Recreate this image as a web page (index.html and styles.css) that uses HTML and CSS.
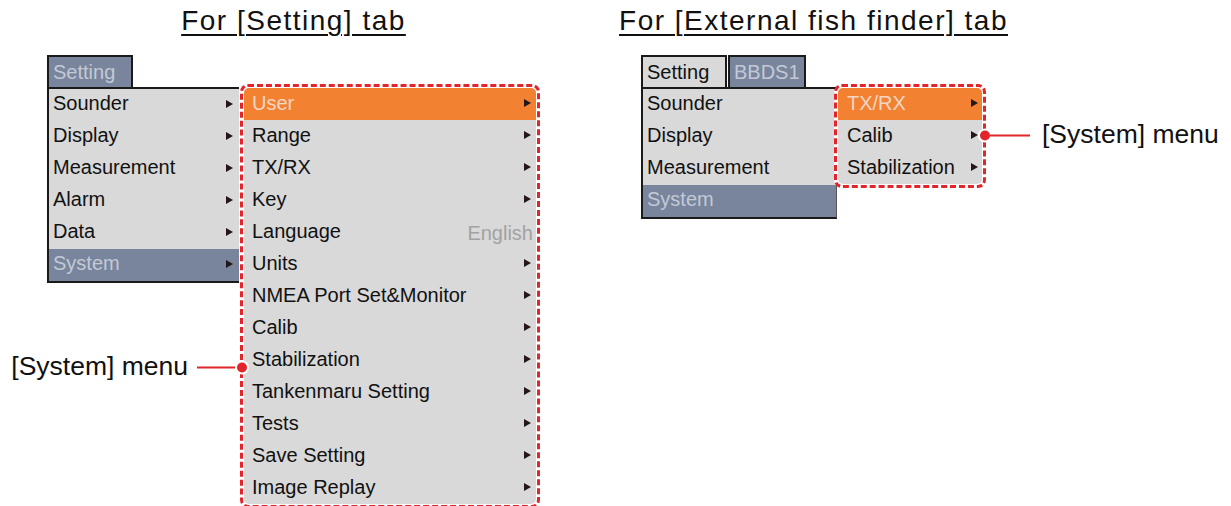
FILE: index.html
```html
<!DOCTYPE html>
<html lang="en">
<head>
  <meta charset="UTF-8" />
  <title>System menu</title>
  <link rel="stylesheet" href="styles.css">
</head>
<body>
  <section class="panel panel-setting">
    <h2 class="title">For [Setting] tab</h2>
    <div class="menus">
      <div class="main">
        <div class="tabs">
          <span class="tab tab-current">Setting</span>
        </div>
        <ul class="menu">
          <li class="item">Sounder<i class="arrow"></i></li>
          <li class="item">Display<i class="arrow"></i></li>
          <li class="item">Measurement<i class="arrow"></i></li>
          <li class="item">Alarm<i class="arrow"></i></li>
          <li class="item">Data<i class="arrow"></i></li>
          <li class="item selected">System<i class="arrow"></i></li>
        </ul>
      </div>

      <div class="outline">
        <ul class="submenu">
          <li class="item active">User<i class="arrow"></i></li>
          <li class="item">Range<i class="arrow"></i></li>
          <li class="item">TX/RX<i class="arrow"></i></li>
          <li class="item">Key<i class="arrow"></i></li>
          <li class="item">Language<span class="value">English</span></li>
          <li class="item">Units<i class="arrow"></i></li>
          <li class="item">NMEA Port Set&amp;Monitor<i class="arrow"></i></li>
          <li class="item">Calib<i class="arrow"></i></li>
          <li class="item">Stabilization<i class="arrow"></i></li>
          <li class="item">Tankenmaru Setting<i class="arrow"></i></li>
          <li class="item">Tests<i class="arrow"></i></li>
          <li class="item">Save Setting<i class="arrow"></i></li>
          <li class="item">Image Replay<i class="arrow"></i></li>
        </ul>
        <div class="callout callout-left">
          <span class="callout-text">[System] menu</span>
          <span class="callout-line"></span>
          <span class="callout-dot"></span>
        </div>
      </div>
    </div>
  </section>

  <section class="panel panel-external">
    <h2 class="title">For [External fish finder] tab</h2>
    <div class="menus">
      <div class="main">
        <div class="tabs">
          <span class="tab">Setting</span>
          <span class="tab tab-current tab-bbds">BBDS1</span>
        </div>
        <ul class="menu menu-short">
          <li class="item">Sounder</li>
          <li class="item">Display</li>
          <li class="item">Measurement</li>
          <li class="item selected">System</li>
        </ul>
      </div>

      <div class="outline outline-short">
        <ul class="submenu submenu-short">
          <li class="item active">TX/RX<i class="arrow"></i></li>
          <li class="item">Calib<i class="arrow"></i></li>
          <li class="item">Stabilization<i class="arrow"></i></li>
        </ul>
        <div class="callout callout-right">
          <span class="callout-dot"></span>
          <span class="callout-line"></span>
          <span class="callout-text">[System] menu</span>
        </div>
      </div>
    </div>
  </section>
</body>
</html>
```

FILE: styles.css
```css
body {
  margin: 0;
  padding: 4px 0 0 47px;
  font-family: 'Liberation Sans', Arial, sans-serif;
  background: #fff;
  color: #111;
  display: flex;
  gap: 101px;
}

ul {
  list-style: none;
  margin: 0;
  padding: 0;
}

.panel {
  display: flex;
  flex-direction: column;
  align-items: center;
}

.panel-external {
  width: 345px;
}

.title {
  margin: 0 0 17px;
  font-size: 28px;
  font-weight: normal;
  line-height: 34px;
  letter-spacing: 1.5px;
  white-space: nowrap;
  text-decoration: underline;
  text-decoration-thickness: 2px;
  text-underline-offset: 4px;
}

.menus {
  display: flex;
  align-items: flex-start;
  align-self: stretch;
}

/* tab strip + main menu */
.tabs {
  display: flex;
  gap: 1px;
}

.tab {
  width: 78px;
  height: 30px;
  line-height: 30px;
  padding-left: 4px;
  font-size: 20px;
  background: #d9d9d9;
  border: 2px solid #1a1a1a;
  border-bottom: none;
}

.tab-current {
  background: #78859d;
  color: #c3c9d5;
}

.tab-bbds {
  width: 70px;
}

.menu {
  width: 190px;
  background: #d9d9d9;
  border: 2px solid #1a1a1a;
  border-right: none;
}

.menu-short {
  width: 193px;
  border-right: 1px solid #555;
}

.item {
  display: flex;
  align-items: center;
  height: 32px;
  padding: 0 6px 3px 4px;
  box-sizing: border-box;
  font-size: 20px;
  white-space: nowrap;
}

.item.selected {
  background: #78859d;
  color: #c3c9d5;
}

.arrow {
  margin-left: auto;
  width: 0;
  height: 0;
  border-left: 7px solid #231815;
  border-top: 4px solid transparent;
  border-bottom: 4px solid transparent;
}

/* dashed frame around the [System] submenu */
.outline {
  position: relative;
  margin: 29px 0 0 1px;
  padding: 1px;
  border: 3px dashed #e2242b;
  border-radius: 8px;
  background: #fff;
}

.outline-short {
  margin-left: -3px;
}

.submenu {
  width: 292px;
  background: #d9d9d9;
  border-radius: 5px;
  overflow: hidden;
}

.submenu-short {
  width: 144px;
}

.submenu .item {
  padding: 0 5px 2px 8px;
}

.submenu-short .item {
  padding: 0 4px 2px 9px;
}

.item.active {
  background: #f28232;
  color: #f3d6c4;
}

.value {
  margin-left: auto;
  margin-right: -2px;
  color: #a2a2a2;
  padding-top: 4px;
}

/* callout labels */
.callout {
  position: absolute;
  display: flex;
  align-items: center;
  transform: translateY(-50%);
  white-space: nowrap;
}

.callout-left {
  right: calc(100% - 4px);
  top: 280px;
}

.callout-right {
  left: calc(100% - 3px);
  top: 48px;
}

.callout-text {
  font-size: 26.5px;
  padding-bottom: 2px;
}

.callout-left .callout-text {
  margin-right: 9px;
}

.callout-right .callout-text {
  margin-left: 12px;
}

.callout-line {
  width: 40px;
  height: 2px;
  background: #e2242b;
}

.callout-dot {
  width: 10px;
  height: 10px;
  border-radius: 50%;
  background: #e2242b;
  box-shadow: 0 0 0 2px #fff;
}
```
